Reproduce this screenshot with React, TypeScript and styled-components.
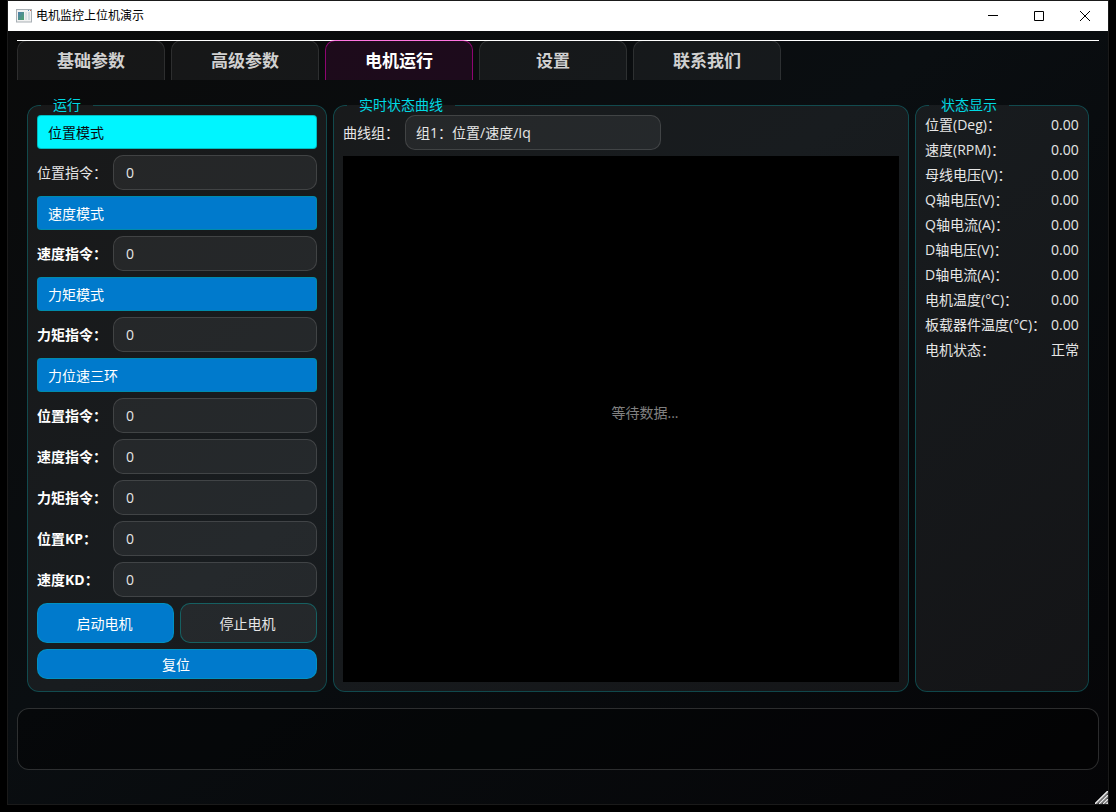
import React, { useState } from "react";
import styled, { createGlobalStyle, css } from "styled-components";

const GlobalStyle = createGlobalStyle`
  *, *::before, *::after { box-sizing: border-box; }
  body {
    margin: 0;
    background: #000;
    color: #e6e6e6;
    font: 14px/20px "Open Sans", "Noto Sans CJK SC", sans-serif;
  }
  button, input, select { font: inherit; color: inherit; margin: 0; }
`;

const Window = styled.div`
  position: relative;
  display: flex;
  flex-direction: column;
  min-height: calc(100vh - 7px);
  margin: 0 7px 7px;
  border: 1px solid #1a1a1a;
  background: linear-gradient(to bottom right, #0a0a0a 0%, #0a0e11 45%, #050507 100%);
`;

const TitleBar = styled.header`
  display: flex;
  align-items: center;
  height: 30px;
  padding-left: 8px;
  background: #fff;
  color: #000;
`;

const Title = styled.h1`
  flex: 1;
  margin: 0 0 0 4px;
  font-size: 12px;
  font-weight: 400;
  line-height: 16px;
`;

const WindowButton = styled.button`
  display: grid;
  place-items: center;
  width: 46px;
  height: 30px;
  padding: 0;
  border: 0;
  background: transparent;
`;

const Body = styled.main`
  flex: 1;
  display: flex;
  flex-direction: column;
  padding: 9px 9px 34px;
`;

const TabBar = styled.div`
  display: flex;
  gap: 6px;
  height: 40px;
  border-top: 1px solid #fff;
`;

const Tab = styled.button<{ $active: boolean }>`
  width: 148px;
  height: 40px;
  margin-top: -1px;
  padding: 0;
  border: 1px solid rgba(255, 255, 255, 0.1);
  border-bottom: 0;
  border-radius: 10px 10px 0 0;
  background: rgba(255, 255, 255, 0.05);
  color: #d0d0d0;
  font-size: 17px;
  font-weight: 700;
  ${(p) =>
    p.$active &&
    css`
      border-color: rgba(255, 0, 200, 0.5);
      background: rgba(255, 0, 200, 0.08);
      color: #fff;
    `}
`;

const TabPage = styled.div`
  flex: 1;
  display: grid;
  grid-template-columns: 300px minmax(0, 1fr) 174px;
  gap: 6px;
  padding: 18px 10px 16px;
`;

const Group = styled.fieldset`
  display: flex;
  flex-direction: column;
  min-width: 0;
  margin: 0;
  padding: 0 9px 9px;
  border: 1px solid rgba(0, 245, 255, 0.22);
  border-radius: 12px;
  background: rgba(255, 255, 255, 0.06);
`;

const GroupTitle = styled.legend`
  margin-left: 4px;
  padding: 0 12px;
  color: #00d9e2;
  line-height: 14px;
`;

const Column = styled.div`
  flex: 1;
  display: flex;
  flex-direction: column;
  gap: 6px;
  padding-top: 3px;
`;

const ModeButton = styled.button<{ $active: boolean }>`
  height: 34px;
  padding: 2px 10px 0;
  border: 1px solid rgba(0, 150, 150, 0.6);
  border-radius: 4px;
  background: ${(p) => (p.$active ? "#00f5ff" : "#007acc")};
  color: ${(p) => (p.$active ? "#0a0a0f" : "#fff")};
  text-align: left;
`;

const Field = styled.div`
  display: flex;
  align-items: center;
`;

const FieldLabel = styled.label<{ $strong?: boolean }>`
  width: 76px;
  white-space: nowrap;
  color: ${(p) => (p.$strong ? "#fff" : "#e6e6e6")};
  font-weight: ${(p) => (p.$strong ? 700 : 400)};
`;

const controlStyle = css`
  height: 35px;
  border: 1px solid rgba(255, 255, 255, 0.13);
  border-radius: 10px;
  background: rgba(255, 255, 255, 0.06);
  outline: none;
`;

const TextInput = styled.input`
  ${controlStyle}
  flex: 1;
  min-width: 0;
  padding: 0 12px;
`;

const Actions = styled.div`
  display: grid;
  grid-template-columns: 1fr 1fr;
  gap: 6px;
`;

const ActionButton = styled.button<{ $primary?: boolean; $wide?: boolean }>`
  grid-column: ${(p) => (p.$wide ? "1 / -1" : "auto")};
  height: ${(p) => (p.$wide ? 30 : 40)}px;
  padding: 2px 2px 0 0;
  border: 1px solid rgba(0, 180, 180, 0.4);
  border-radius: 10px;
  background: ${(p) => (p.$primary ? "#007acc" : "rgba(255, 255, 255, 0.06)")};
  color: ${(p) => (p.$primary ? "#fff" : "#e6e6e6")};
`;

const CurveBar = styled.div`
  display: flex;
  align-items: center;
  gap: 6px;
`;

const CurveLabel = styled.label`
  width: 56px;
  white-space: nowrap;
`;

const CurveSelect = styled.select`
  ${controlStyle}
  appearance: none;
  width: 256px;
  padding: 0 10px;

  option { background: #1a1c1e; }
`;

const Plot = styled.div`
  flex: 1;
  display: grid;
  place-items: center;
  padding: 0 0 12px 48px;
  background: #000;
  color: #808080;
`;

const StatusTable = styled.table`
  width: 100%;
  border-collapse: collapse;

  th, td {
    height: 25px;
    padding: 0;
    font-weight: 400;
    text-align: left;
    white-space: nowrap;
  }
  td { width: 28px; }
`;

const MessagePanel = styled.section`
  height: 62px;
  border: 1px solid rgba(255, 255, 255, 0.16);
  border-radius: 12px;
  background: rgba(0, 0, 0, 0.4);
`;

const ResizeGrip = styled.svg`
  position: absolute;
  right: 0;
  bottom: 0;
`;

const AppIcon = () => (
  <svg width="16" height="14" viewBox="0 0 16 14" aria-hidden="true">
    <defs>
      <linearGradient id="pane" x1="0" y1="0" x2="1" y2="1">
        <stop offset="0" stopColor="#4f7fae" />
        <stop offset="1" stopColor="#4fa36c" />
      </linearGradient>
    </defs>
    <rect x="0.5" y="0.5" width="15" height="12.5" fill="#f2f2f2" stroke="#a9b0b5" />
    <rect x="2" y="3" width="6" height="8" fill="url(#pane)" />
    <rect x="9" y="3" width="2" height="8" fill="#dfe3e6" />
    <rect x="12" y="3" width="2" height="8" fill="#d3dce0" />
    <rect x="12" y="1" width="1" height="1" fill="#5b8fc0" />
    <rect x="14" y="1" width="1" height="1" fill="#c06b5b" />
  </svg>
);

const tabs = ["基础参数", "高级参数", "电机运行", "设置", "联系我们"];

type Row =
  | { kind: "mode"; text: string }
  | { kind: "field"; id: string; text: string; strong?: boolean };

const rows: Row[] = [
  { kind: "mode", text: "位置模式" },
  { kind: "field", id: "pos", text: "位置指令：" },
  { kind: "mode", text: "速度模式" },
  { kind: "field", id: "speed", text: "速度指令：", strong: true },
  { kind: "mode", text: "力矩模式" },
  { kind: "field", id: "torque", text: "力矩指令：", strong: true },
  { kind: "mode", text: "力位速三环" },
  { kind: "field", id: "loop-pos", text: "位置指令：", strong: true },
  { kind: "field", id: "loop-speed", text: "速度指令：", strong: true },
  { kind: "field", id: "loop-torque", text: "力矩指令：", strong: true },
  { kind: "field", id: "kp", text: "位置KP：", strong: true },
  { kind: "field", id: "kd", text: "速度KD：", strong: true },
];

const status: [string, string][] = [
  ["位置(Deg)：", "0.00"],
  ["速度(RPM)：", "0.00"],
  ["母线电压(V)：", "0.00"],
  ["Q轴电压(V)：", "0.00"],
  ["Q轴电流(A)：", "0.00"],
  ["D轴电压(V)：", "0.00"],
  ["D轴电流(A)：", "0.00"],
  ["电机温度(°C)：", "0.00"],
  ["板载器件温度(°C)：", "0.00"],
  ["电机状态：", "正常"],
];

export default function App() {
  const [tab, setTab] = useState("电机运行");
  const [mode, setMode] = useState("位置模式");

  return (
    <>
      <GlobalStyle />
      <Window>
        <TitleBar>
          <AppIcon />
          <Title>电机监控上位机演示</Title>
          <WindowButton aria-label="最小化">
            <svg width="10" height="10" stroke="#000"><path d="M0 4.5h10" /></svg>
          </WindowButton>
          <WindowButton aria-label="最大化">
            <svg width="10" height="10" stroke="#000" fill="none"><path d="M.5.5h9v9h-9z" /></svg>
          </WindowButton>
          <WindowButton aria-label="关闭">
            <svg width="10" height="10" stroke="#000"><path d="M0 0l10 10M10 0L0 10" /></svg>
          </WindowButton>
        </TitleBar>
        <Body>
          <TabBar role="tablist">
            {tabs.map((t) => (
              <Tab key={t} role="tab" aria-selected={t === tab} $active={t === tab} onClick={() => setTab(t)}>
                {t}
              </Tab>
            ))}
          </TabBar>
          <TabPage role="tabpanel">
            <Group>
              <GroupTitle>运行</GroupTitle>
              <Column>
                {rows.map((r) =>
                  r.kind === "mode" ? (
                    <ModeButton key={r.text} $active={r.text === mode} onClick={() => setMode(r.text)}>
                      {r.text}
                    </ModeButton>
                  ) : (
                    <Field key={r.id}>
                      <FieldLabel htmlFor={r.id} $strong={r.strong}>{r.text}</FieldLabel>
                      <TextInput id={r.id} type="text" defaultValue="0" />
                    </Field>
                  )
                )}
                <Actions>
                  <ActionButton $primary>启动电机</ActionButton>
                  <ActionButton>停止电机</ActionButton>
                  <ActionButton $primary $wide>复位</ActionButton>
                </Actions>
              </Column>
            </Group>
            <Group>
              <GroupTitle>实时状态曲线</GroupTitle>
              <Column>
                <CurveBar>
                  <CurveLabel htmlFor="curve">曲线组：</CurveLabel>
                  <CurveSelect id="curve">
                    <option>组1：位置/速度/Iq</option>
                  </CurveSelect>
                </CurveBar>
                <Plot>等待数据...</Plot>
              </Column>
            </Group>
            <Group>
              <GroupTitle>状态显示</GroupTitle>
              <StatusTable>
                <tbody>
                  {status.map(([name, value]) => (
                    <tr key={name}>
                      <th scope="row">{name}</th>
                      <td>{value}</td>
                    </tr>
                  ))}
                </tbody>
              </StatusTable>
            </Group>
          </TabPage>
          <MessagePanel aria-label="消息" />
        </Body>
        <ResizeGrip width="13" height="13" viewBox="0 0 13 13" stroke="#e8e8e8" strokeWidth="1.6" aria-hidden="true">
          <path d="M0 13L13 0M4 13L13 4M8 13L13 8M11.5 13L13 11.5" />
          <path d="M2 13L13 2M6 13L13 6M10 13L13 10" stroke="#8a8a8a" strokeWidth="0.8" />
        </ResizeGrip>
      </Window>
    </>
  );
}
